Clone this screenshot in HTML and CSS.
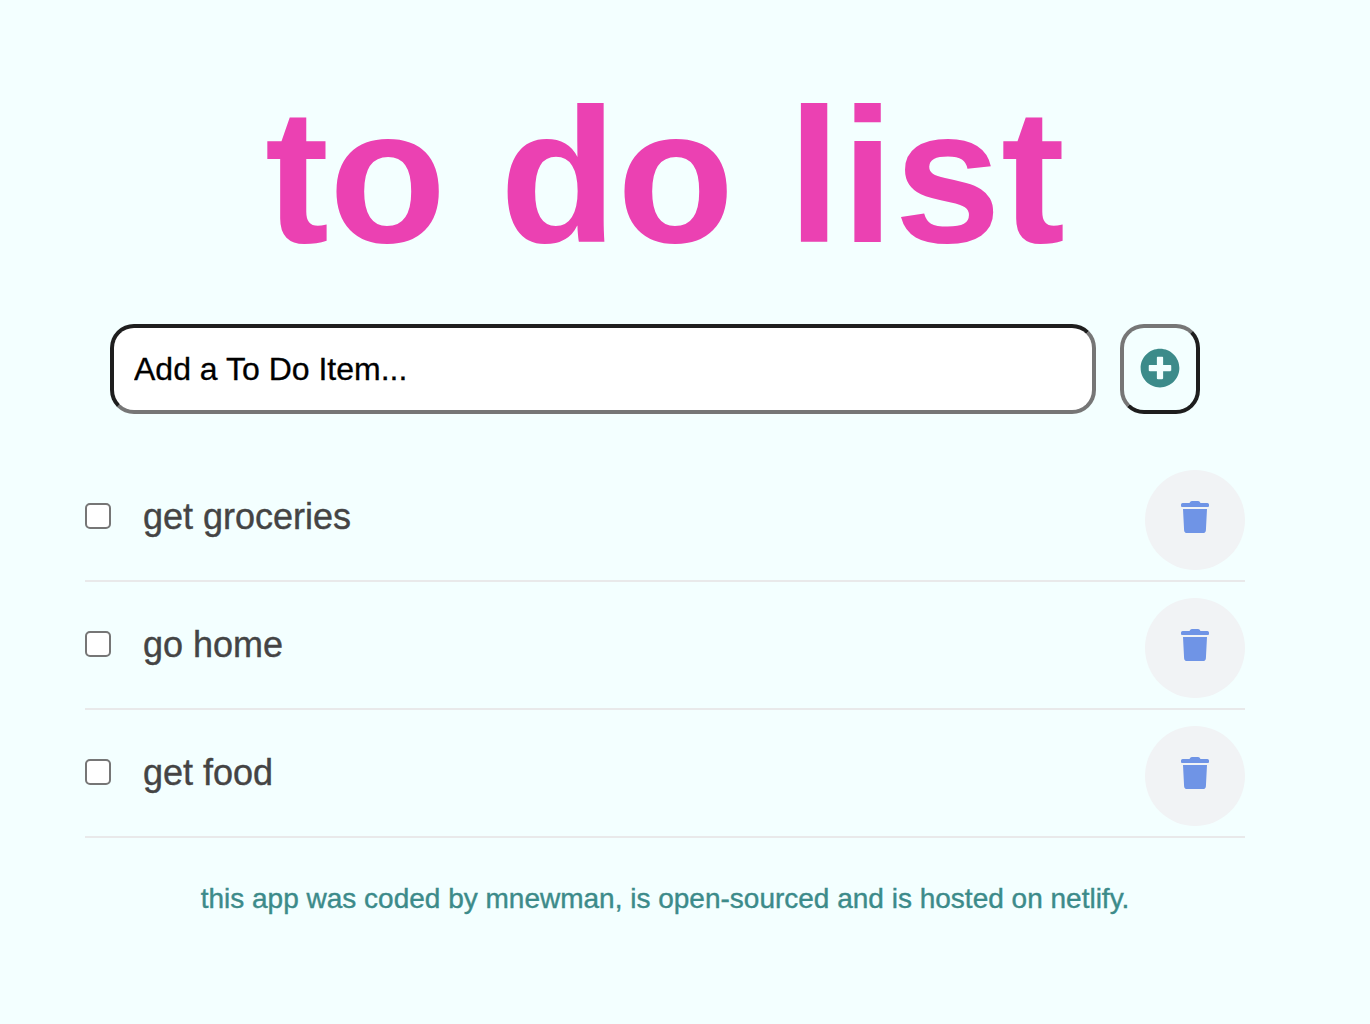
FILE: index.html
```html
<!DOCTYPE html>
<html lang="en">
<head>
<meta charset="utf-8">
<title>to do list</title>
<link rel="stylesheet" href="styles.css">
</head>
<body>
<svg class="sprite" aria-hidden="true">
  <symbol id="trash" viewBox="0 0 28 32">
    <path d="M0 3.6Q0 2 1.6 2H8.5L9.3 .8Q9.9 0 11 0H17Q18.1 0 18.7 .8L19.5 2H26.4Q28 2 28 3.6V5Q28 6 27 6H1Q0 6 0 5ZM2 8H26L24.9 29.2Q24.7 32 22 32H6Q3.3 32 3.1 29.2Z"/>
  </symbol>
</svg>
<main class="app">
  <h1 class="title">to do list</h1>
  <form class="add-form">
    <input class="add-input" type="text" placeholder="Add a To Do Item..." aria-label="Add a To Do Item">
    <button class="add-button" type="button" aria-label="Add">
      <svg class="plus-icon" viewBox="0 0 512 512"><path d="M256 8C119 8 8 119 8 256s111 248 248 248 248-111 248-248S393 8 256 8zm144 276c0 6.600-5.400 12-12 12h-92v92c0 6.600-5.400 12-12 12h-56c-6.600 0-12-5.400-12-12v-92h-92c-6.600 0-12-5.400-12-12v-56c0-6.600 5.400-12 12-12h92v-92c0-6.600 5.400-12 12-12h56c6.600 0 12 5.400 12 12v92h92c6.600 0 12 5.400 12 12v56z"/></svg>
    </button>
  </form>
  <ul class="items">
    <li class="item">
      <label class="item-label"><input class="check" type="checkbox"><span class="item-text">get groceries</span></label>
      <button class="delete" type="button" aria-label="Delete"><svg class="trash-icon"><use href="#trash"/></svg></button>
    </li>
    <li class="item">
      <label class="item-label"><input class="check" type="checkbox"><span class="item-text">go home</span></label>
      <button class="delete" type="button" aria-label="Delete"><svg class="trash-icon"><use href="#trash"/></svg></button>
    </li>
    <li class="item">
      <label class="item-label"><input class="check" type="checkbox"><span class="item-text">get food</span></label>
      <button class="delete" type="button" aria-label="Delete"><svg class="trash-icon"><use href="#trash"/></svg></button>
    </li>
  </ul>
  <footer class="footer">this app was coded by mnewman, is open-sourced and is hosted on netlify.</footer>
</main>
</body>
</html>
```
FILE: styles.css
```css
* { box-sizing: border-box; }
body {
  margin: 0;
  background: #f3ffff;
  font-family: "Liberation Sans", Arial, sans-serif;
}
.sprite { display: none; }
.app { width: 1160px; margin-left: 85px; padding-top: 66px; }
.title {
  margin: 0;
  height: 258px;
  line-height: 220px;
  font-size: 192px;
  font-weight: bold;
  text-align: center;
  white-space: nowrap;
  color: #eb41b2;
}
.add-form { display: flex; gap: 24px; margin: 0 45px 0 25px; }
.add-input {
  width: 986px;
  height: 90px;
  padding: 0 20px;
  border: 4px solid;
  border-color: #1e1e1e #767676 #767676 #1e1e1e;
  border-radius: 24px;
  background: #fff;
  font: 32px "Liberation Sans", Arial, sans-serif;
}
.add-input::placeholder { color: #000; opacity: 1; -webkit-text-stroke: 0.3px; }
.add-button {
  display: flex;
  align-items: center;
  justify-content: center;
  width: 80px;
  height: 90px;
  padding: 0 0 2px;
  border: 4px solid;
  border-color: #767676 #1e1e1e #1e1e1e #767676;
  border-radius: 24px;
  background: transparent;
}
.plus-icon { width: 40px; height: 40px; fill: #3c8b8a; }
.items { margin: 40px 0 0; padding: 0; list-style: none; }
.item {
  display: flex;
  justify-content: space-between;
  height: 128px;
  padding: 16px 0 10px;
  border-bottom: 2px solid #e9e9ea;
}
.item-label { display: flex; align-items: center; height: 92px; }
.check {
  appearance: none;
  width: 26px;
  height: 26px;
  margin: 0 32px 0 0;
  border: 2px solid #767676;
  border-radius: 5px;
  background: #fff;
}
.item-text {
  padding-top: 2px;
  font-size: 36px;
  line-height: 42px;
  color: #444;
  -webkit-text-stroke: 0.4px;
}
.delete {
  display: flex;
  justify-content: center;
  width: 100px;
  height: 100px;
  padding: 31px 0 0;
  border: 0;
  border-radius: 50%;
  background: #f1f3f5;
}
.trash-icon { width: 28px; height: 32px; fill: #6f94e6; }
.footer {
  margin-top: 45px;
  font-size: 28px;
  line-height: 32px;
  text-align: center;
  color: #3c8b8a;
  -webkit-text-stroke: 0.4px;
}
```
